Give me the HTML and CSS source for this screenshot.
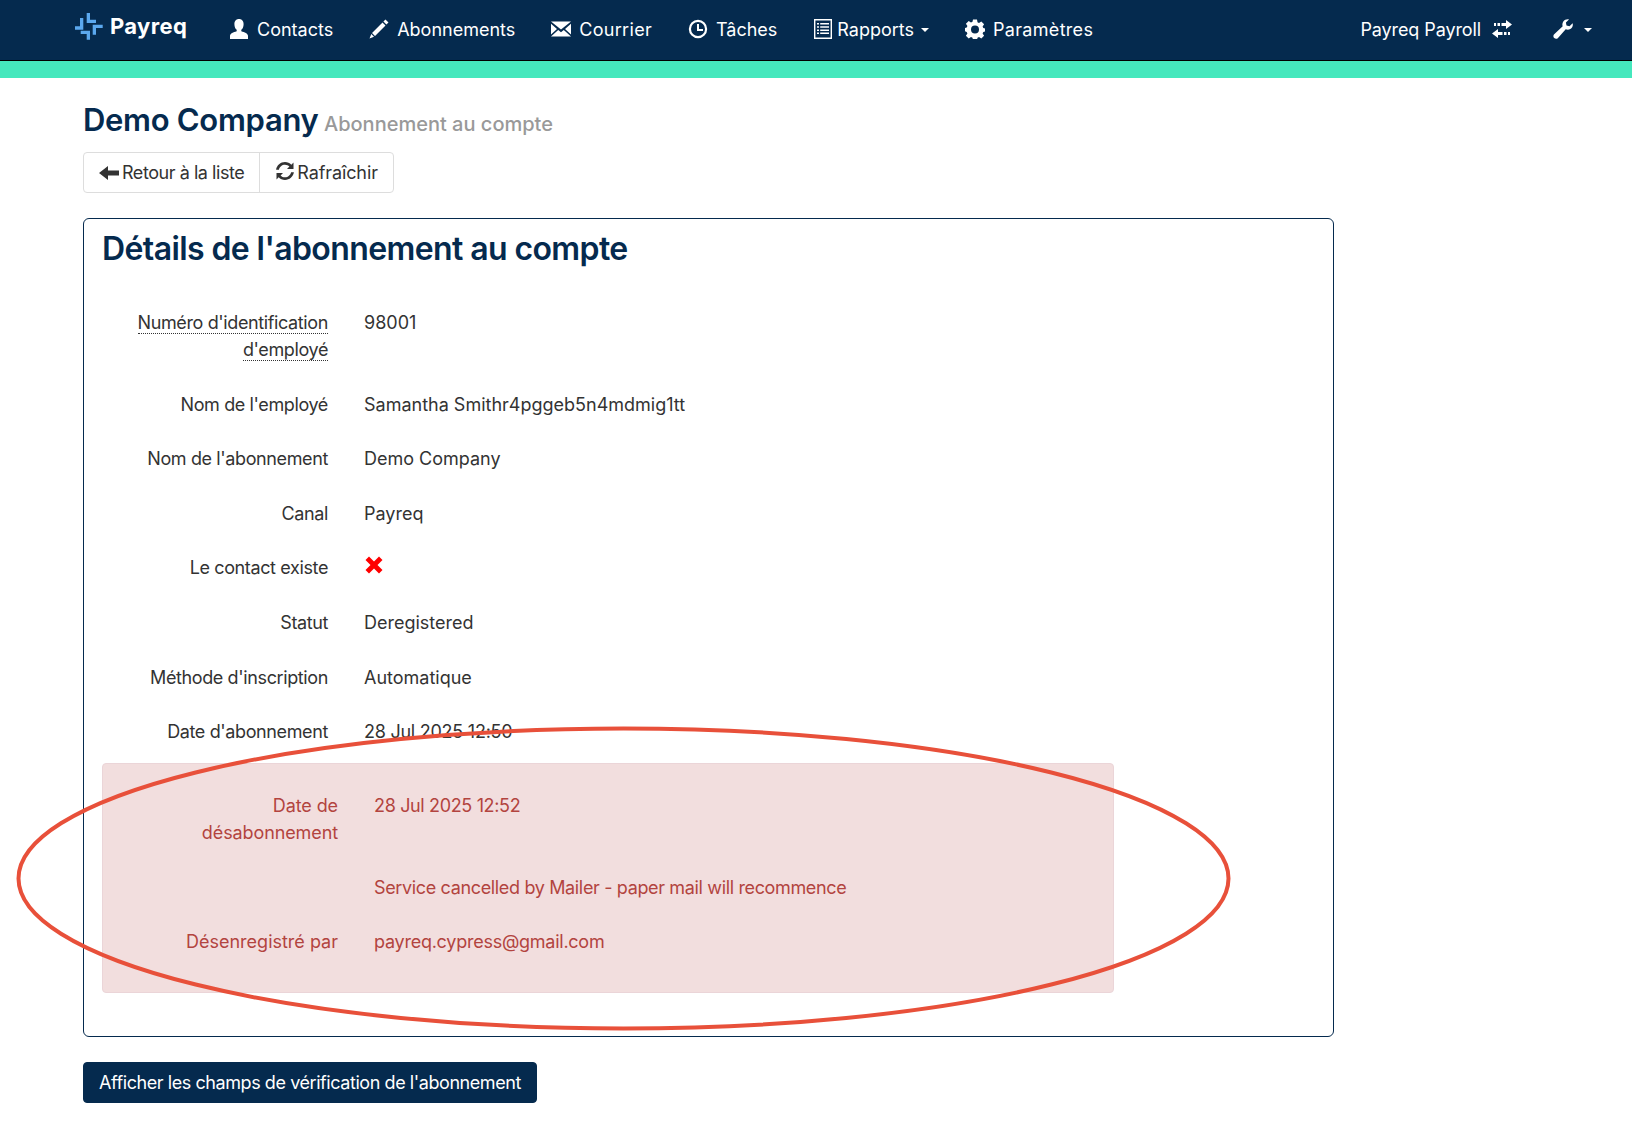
FILE: index.html
```html
<!DOCTYPE html>
<html lang="fr">
<head>
<meta charset="utf-8">
<title>Payreq</title>
<link rel="stylesheet" href="styles.css">
</head>
<body>
<svg class="defs" width="0" height="0" aria-hidden="true">
  <symbol id="i-user" viewBox="0 0 20 20"><path d="M10 0c3 0 4.600 2.200 4.600 5.200 0 2.600-1 4.600-2.300 5.600v1.400c3.400 1 6.500 2.200 6.700 4.600V20H1v-3.200c.2-2.400 3.300-3.600 6.700-4.600v-1.400C6.400 9.800 5.400 7.800 5.400 5.200 5.400 2.200 7 0 10 0z"/></symbol>
  <symbol id="i-pencil" viewBox="0 0 20 20"><path d="M16.500 0.500l3 3-2.100 2.100-3-3zM13.500 3.500l3 3L6 17l-3-3zM2.300 15l2.700 2.700L0.500 19.500z"/></symbol>
  <symbol id="i-mail" viewBox="0 0 20 20"><path d="M0 2.500h20L10 10.500zM0 4.800L6 10l-6 5.500zM20 4.800L14 10l6 5.500zM7.200 11l2.800 2.300 2.800-2.300 7.200 6.500H0z"/></symbol>
  <symbol id="i-clock" viewBox="0 0 20 20"><path fill-rule="evenodd" d="M10 .8a9.200 9.200 0 1 1 0 18.400A9.200 9.200 0 0 1 10 .8zm0 2.200a7 7 0 1 0 0 14 7 7 0 0 0 0-14zM9 5h2v5h4v2H9z"/></symbol>
  <symbol id="i-list" viewBox="0 0 20 20"><path fill-rule="evenodd" d="M1 0h18v20H1zm1.400 1.400v17.200h15.200V1.400zM4 4h2v1.500H4zm3.200 0H16v1.500H7.200zM4 7.200h2v1.500H4zm3.200 0H16v1.500H7.200zM4 10.400h2v1.500H4zm3.200 0H16v1.500H7.200zM4 13.600h2v1.500H4zm3.200 0H16v1.500H7.200z"/></symbol>
  <symbol id="i-cog" viewBox="0 0 20 20"><path fill-rule="evenodd" d="M8 .5h4l.5 2.700 1.500.7 2.300-1.500 2.800 2.800-1.500 2.300.7 1.500 2.200.5v3l-2.200.5-.7 1.500 1.500 2.300-2.800 2.800-2.300-1.500-1.500.7-.5 2.200H8l-.5-2.200-1.500-.7-2.300 1.500-2.800-2.800 1.500-2.300-.7-1.500L-.5 12V9l2.200-.5.7-1.500L.9 4.700l2.800-2.800L6 3.400l1.500-.7zM10 6.500a4 4 0 1 0 0 8 4 4 0 0 0 0-8z"/></symbol>
  <symbol id="i-transfer" viewBox="0 0 20 20"><path d="M14 1l6 4.500L14 10V7H9.500V4H14zM6 10v3h4.500v3H6v3l-6-4.500zM2 4h2v3H2zM5.500 4h2.500v3H5.500zM12 13h2.500v3H12zM16 13h2v3h-2z"/></symbol>
  <symbol id="i-wrench" viewBox="0 0 20 20"><path d="M19.600 4.200c.7 2.300-.2 4.700-2.300 5.900-1.500.8-3.200.8-4.600.2L5 19c-1.100 1.100-2.700 1.100-3.800.1-1.100-1.100-1.100-2.800 0-3.800l8.500-8C9.100 5.800 9.300 4 10.300 2.600 11.600.8 13.900 0 16 .5L12.900 3.600l.6 3 3 .7z"/></symbol>
  <symbol id="i-back" viewBox="0 0 20 20"><path d="M0 10L9 3v4.500h11v5H9V17z"/></symbol>
  <symbol id="i-refresh" viewBox="0 0 20 20"><path d="M10 1c2.500 0 4.700 1 6.300 2.700L18.500 1.500V8h-6.500l2.400-2.400C13.300 4.400 11.800 3.700 10 3.700c-3 0-5.500 2.100-6.100 5H1.100C1.700 4.300 5.500 1 10 1zM1.500 12H8l-2.400 2.400c1.100 1.200 2.600 1.900 4.400 1.900 3 0 5.500-2.100 6.100-5h2.800C18.300 15.700 14.500 19 10 19c-2.500 0-4.700-1-6.300-2.700L1.500 18.500z"/></symbol>
  <symbol id="i-remove" viewBox="0 0 20 20"><path d="M5 1.500L10 6.500l5-5 3.500 3.500-5 5 5 5-3.500 3.500-5-5-5 5L1.500 15l5-5-5-5z"/></symbol>
</svg>

<header class="navbar">
  <a class="brand">
    <svg class="logo" viewBox="0 0 28 27"><path d="M11.700 0H15V6.700H21V10H11.700zM5 5H8.300V16.700H0V13.300H5zM17.700 11.700H27.700V15H21V21.700H17.700zM5.700 17.700H15V26.700H11.700V21H5.700z"/></svg>
    <span>Payreq</span>
  </a>
  <nav class="nav-main">
    <a class="nav-link"><svg class="ico"><use href="#i-user"/></svg>Contacts</a>
    <a class="nav-link"><svg class="ico"><use href="#i-pencil"/></svg>Abonnements</a>
    <a class="nav-link wide"><svg class="ico"><use href="#i-mail"/></svg>Courrier</a>
    <a class="nav-link"><svg class="ico"><use href="#i-clock"/></svg>Tâches</a>
    <a class="nav-link tight"><svg class="ico"><use href="#i-list"/></svg>Rapports<i class="caret"></i></a>
    <a class="nav-link wide"><svg class="ico"><use href="#i-cog"/></svg>Paramètres</a>
  </nav>
  <nav class="nav-right">
    <a class="nav-link org">Payreq Payroll<svg class="ico"><use href="#i-transfer"/></svg></a>
    <a class="nav-link tool"><svg class="ico"><use href="#i-wrench"/></svg><i class="caret"></i></a>
  </nav>
</header>
<div class="accent"></div>

<main class="page">
  <h1 class="title">Demo Company <small>Abonnement au compte</small></h1>
  <div class="btn-group">
    <a class="btn"><svg class="ico-sm"><use href="#i-back"/></svg>Retour à la liste</a>
    <a class="btn btn-refresh"><svg class="ico-sm"><use href="#i-refresh"/></svg>Rafraîchir</a>
  </div>

  <section class="card">
    <h2 class="card-title">Détails de l'abonnement au compte</h2>
    <dl class="details">
      <dt><span class="abbr">Numéro d'identification d'employé</span></dt><dd>98001</dd>
      <dt>Nom de l'employé</dt><dd>Samantha Smithr4pggeb5n4mdmig1tt</dd>
      <dt>Nom de l'abonnement</dt><dd>Demo Company</dd>
      <dt>Canal</dt><dd>Payreq</dd>
      <dt>Le contact existe</dt><dd><svg class="ico-x"><use href="#i-remove"/></svg></dd>
      <dt>Statut</dt><dd>Deregistered</dd>
      <dt>Méthode d'inscription</dt><dd>Automatique</dd>
      <dt>Date d'abonnement</dt><dd class="date">28 Jul 2025 12:50</dd>
    </dl>
    <dl class="details alert">
      <dt>Date de désabonnement</dt><dd>28 Jul 2025 12:52</dd>
      <dt></dt><dd>Service cancelled by Mailer - paper mail will recommence</dd>
      <dt class="last">Désenregistré par</dt><dd class="last">payreq.cypress@gmail.com</dd>
    </dl>
  </section>

  <a class="btn-primary">Afficher les champs de vérification de l'abonnement</a>
</main>

<svg class="annotation" viewBox="0 0 1632 1131" aria-hidden="true"><ellipse cx="623.500" cy="878.500" rx="605" ry="150"/></svg>
</body>
</html>
```
FILE: styles.css
```css
* { box-sizing: border-box; }
html, body { margin: 0; padding: 0; }
body {
  position: relative;
  height: 1131px;
  overflow: hidden;
  background: #fff;
  color: #333;
  font-family: Inter, "Noto Sans", sans-serif;
  font-size: 18px;
  line-height: 27px;
}
.defs { position: absolute; }
a { color: inherit; text-decoration: none; }

.navbar {
  display: flex;
  align-items: center;
  height: 61px;
  padding: 0 40px 2px 75px;
  background: #052a4e;
  border-bottom: 1px solid #000;
  color: #fff;
}
.brand { display: flex; align-items: center; gap: 7px; font-size: 22px; font-weight: 700; letter-spacing: 0.35px; width: 154px; margin-top: -6px; }
.logo { width: 28px; height: 27px; fill: #5ba8ee; flex: none; }
.nav-main { display: flex; gap: 36px; }
.nav-right { display: flex; margin-left: auto; gap: 41px; }
.nav-link { display: flex; align-items: center; gap: 8px; }
.nav-link.tight { gap: 4px; }
.nav-link.wide { letter-spacing: 0.3px; }
.org { gap: 11px; letter-spacing: -0.1px; }
.tool { gap: 8px; }
.ico { width: 20px; height: 20px; fill: #fff; flex: none; }
.caret {
  width: 0; height: 0; margin-left: 3px; margin-top: 2px;
  border-top: 4px solid #fff;
  border-left: 4px solid transparent;
  border-right: 4px solid transparent;
}
.accent { height: 17px; background: #45e8bd; }

.page { padding: 0 83px; width: 1417px; }
.title { margin: 22px 0 8px; font-size: 31px; line-height: 40px; font-weight: 600; color: #052a4e; letter-spacing: -0.3px; }
.title small { font-size: 20px; font-weight: 500; color: #999; margin-left: -2px; letter-spacing: 0; }

.btn-group { display: inline-flex; height: 41px; border: 1px solid #ddd; border-radius: 4px; vertical-align: top; }
.btn { display: flex; align-items: center; gap: 3px; padding: 0 15px; letter-spacing: -0.45px; }
.btn + .btn { border-left: 1px solid #ddd; }
.btn-refresh { gap: 2px; letter-spacing: -0.1px; }
.ico-sm { width: 20px; height: 20px; fill: #333; flex: none; }
.btn-refresh .ico-sm { margin-top: -3px; }

.card {
  margin-top: 25px;
  height: 819px;
  padding: 9px 18px 0;
  border: 1px solid #052a4e;
  border-radius: 6px;
}
.card-title { margin: 0 0 39px; font-size: 32px; line-height: 42px; font-weight: 600; color: #052a4e; letter-spacing: -0.6px; }

.details {
  display: grid;
  grid-template-columns: 200px 1fr;
  column-gap: 36px;
  row-gap: 27.6px;
  margin: 0;
  padding-left: 26px;
}
dt { font-weight: 400; text-align: right; letter-spacing: -0.38px; }
dd { margin: 0; }
.date { letter-spacing: -0.25px; }
.abbr { border-bottom: 1px dotted #333; }
.ico-x { display: block; width: 20px; height: 20px; fill: #f00; margin-top: 1px; }

.alert {
  margin-top: 18px;
  width: 1012px;
  height: 230px;
  padding: 28px 0 0 35px;
  row-gap: 28.3px;
  align-content: start;
  background: #f2dede;
  border: 1px solid #ebd5d8;
  border-radius: 4px;
  color: #b3443f;
}
.alert dt { letter-spacing: -0.1px; }
.alert dd { letter-spacing: -0.35px; }
.alert dt.last { letter-spacing: 0; margin-top: -1.5px; }
.alert dd.last { letter-spacing: -0.25px; margin-top: -1.5px; }

.btn-primary {
  display: inline-block;
  margin-top: 25px;
  padding: 6px 15px;
  background: #052a4e;
  color: #fff;
  border: 1px solid #052a4e;
  border-radius: 4px;
  letter-spacing: -0.43px;
}

.annotation { position: absolute; left: 0; top: 0; width: 1632px; height: 1131px; pointer-events: none; }
.annotation ellipse { fill: none; stroke: #e8503a; stroke-width: 4; }
```
